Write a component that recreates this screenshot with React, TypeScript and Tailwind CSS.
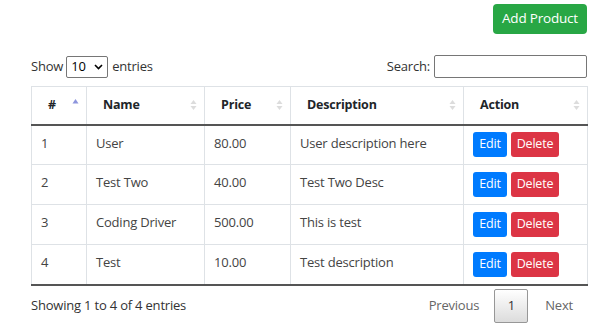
import React from "react";

const rows = [
  { id: "1", name: "User", price: "80.00", desc: "User description here" },
  { id: "2", name: "Test Two", price: "40.00", desc: "Test Two Desc" },
  { id: "3", name: "Coding Driver", price: "500.00", desc: "This is test" },
  { id: "4", name: "Test", price: "10.00", desc: "Test description" },
];

function SortBoth() {
  return (
    <svg width="7" height="12" viewBox="0 0 7 12" className="absolute right-[7px] top-1/2 -translate-y-1/2">
      <polygon points="3.5,1 6.5,5 0.5,5" fill="#dcdcdc" />
      <polygon points="0.5,7 6.5,7 3.5,11" fill="#dcdcdc" />
    </svg>
  );
}

function SortAsc() {
  return (
    <svg width="7" height="12" viewBox="0 0 7 12" className="absolute right-[7px] top-1/2 -translate-y-1/2">
      <polygon points="3.5,0 6.5,4.5 0.5,4.5" fill="#8d95dd" />
    </svg>
  );
}

const headers = [
  { label: "#", w: "w-[55px]", asc: true },
  { label: "Name", w: "w-[118px]", asc: false },
  { label: "Price", w: "w-[86px]", asc: false },
  { label: "Description", w: "w-[173px]", asc: false },
  { label: "Action", w: "w-[124px]", asc: false },
];

export default function App() {
  return (
    <div
      className="w-[600px] h-[330px] bg-white pl-[31px] pr-[13px] pt-[4px] text-[#212529] overflow-hidden"
      style={{ fontFamily: '"Open Sans", "Noto Sans", sans-serif' }}
    >
      <div className="flex justify-end">
        <button className="h-[30px] w-[94px] rounded-[4px] bg-[#28a745] text-white text-[13.5px] tracking-[-0.2px] leading-none">
          Add Product
        </button>
      </div>

      <div className="mt-[21px] flex items-center justify-between h-[23px] text-[13px] tracking-[-0.2px] text-[#333]">
        <div className="flex items-center gap-[2px]">
          <span>Show</span>
          <div className="ml-[1px] mr-[2px] h-[22px] w-[42px] border border-[#767676] rounded-[2px] flex items-center justify-between pl-[4px] pr-[4px] text-[#000]">
            <span>10</span>
            <svg width="9" height="6" viewBox="0 0 9 6">
              <polyline points="1,1 4.5,4.5 8,1" fill="none" stroke="#000" strokeWidth="1.6" />
            </svg>
          </div>
          <span>entries</span>
        </div>
        <div className="flex items-center gap-[4px]">
          <span>Search:</span>
          <div className="h-[23px] w-[153px] border border-[#767676] rounded-[2px] bg-white" />
        </div>
      </div>

      <table className="mt-[8px] w-[556px] border-collapse table-fixed text-[13px] tracking-[-0.2px]">
        <thead>
          <tr className="h-[38px]">
            {headers.map((h) => (
              <th
                key={h.label}
                className={`${h.w} relative border border-[#dee2e6] border-b-2 border-b-[#555] text-left font-bold text-[12.5px] tracking-[-0.2px] pl-[16px] pr-[18px] align-middle text-[#212529]`}
              >
                {h.label}
                {h.asc ? <SortAsc /> : <SortBoth />}
              </th>
            ))}
          </tr>
        </thead>
        <tbody>
          {rows.map((r, i) => {
            const cell = `border border-[#dee2e6] px-[9px] align-middle ${i === rows.length - 1 ? "border-b-2 border-b-[#555]" : ""}`;
            return (
              <tr key={r.id} className="h-[40px]">
                <td className={cell}>
                  <div className="-mt-[3px] text-[#444]">{r.id}</div>
                </td>
                <td className={cell}>
                  <div className="-mt-[3px] text-[#444]">{r.name}</div>
                </td>
                <td className={cell}>
                  <div className="-mt-[3px] text-[#444]">{r.price}</div>
                </td>
                <td className={cell}>
                  <div className="-mt-[3px] text-[#444]">{r.desc}</div>
                </td>
                <td className={cell}>
                  <div className="flex gap-[4px]">
                    <span className="h-[25px] w-[34px] rounded-[3px] bg-[#007bff] text-white text-[12.5px] flex items-center justify-center">
                      Edit
                    </span>
                    <span className="h-[25px] w-[48px] rounded-[3px] bg-[#dc3545] text-white text-[12.5px] flex items-center justify-center">
                      Delete
                    </span>
                  </div>
                </td>
              </tr>
            );
          })}
        </tbody>
      </table>

      <div className="mt-[3px] flex items-center justify-between text-[13px] tracking-[-0.2px] text-[#333]">
        <span>Showing 1 to 4 of 4 entries</span>
        <div className="flex items-center">
          <span className="px-[15px] text-[#666]">Previous</span>
          <span className="h-[34px] w-[34px] flex items-center justify-center border border-[#979797] rounded-[2px] bg-gradient-to-b from-white to-[#dcdcdc] text-[#333]">
            1
          </span>
          <span className="pl-[17px] pr-[14px] text-[#666]">Next</span>
        </div>
      </div>
    </div>
  );
}
